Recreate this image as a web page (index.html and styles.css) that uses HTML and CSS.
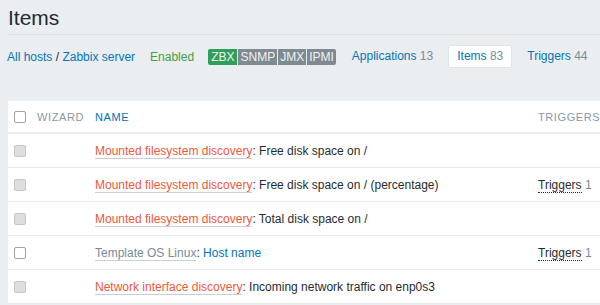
FILE: index.html
```html
<!DOCTYPE html>
<html lang="en">
<head>
    <meta charset="UTF-8">
    <title>Items</title>
    <link rel="stylesheet" href="styles.css">
</head>
<body>
    <div class="page">
        <!-- Header -->
        <div class="header">
            <h1>Items</h1>
        </div>

        <!-- Host navigation -->
        <div class="host-nav">
            <div class="breadcrumb"><a href="#">All hosts</a> / <a href="#">Zabbix server</a></div>
            <span class="status">Enabled</span>
            <div class="tags">
                <span class="tag green">ZBX</span>
                <span class="tag">SNMP</span>
                <span class="tag">JMX</span>
                <span class="tag">IPMI</span>
            </div>
            <div class="tabs">
                <a class="tab" href="#">Applications <span class="count">13</span></a>
                <a class="tab active" href="#">Items <span class="count">83</span></a>
                <a class="tab" href="#">Triggers <span class="count">44</span></a>
            </div>
        </div>

        <!-- Items table -->
        <div class="list">
            <div class="row head">
                <div class="cell"><span class="check"></span></div>
                <div class="cell th">Wizard</div>
                <div class="cell th sort">Name</div>
                <div class="cell th">Triggers</div>
            </div>
            <div class="row">
                <div class="cell"><span class="check off"></span></div>
                <div class="cell"></div>
                <div class="cell"><a class="parent orange" href="#">Mounted filesystem discovery</a>: Free disk space on /</div>
                <div class="cell"></div>
            </div>
            <div class="row">
                <div class="cell"><span class="check off"></span></div>
                <div class="cell"></div>
                <div class="cell"><a class="parent orange" href="#">Mounted filesystem discovery</a>: Free disk space on / (percentage)</div>
                <div class="cell"><span class="hint">Triggers</span> <span class="count">1</span></div>
            </div>
            <div class="row">
                <div class="cell"><span class="check off"></span></div>
                <div class="cell"></div>
                <div class="cell"><a class="parent orange" href="#">Mounted filesystem discovery</a>: Total disk space on /</div>
                <div class="cell"></div>
            </div>
            <div class="row">
                <div class="cell"><span class="check"></span></div>
                <div class="cell"></div>
                <div class="cell"><a class="parent grey" href="#">Template OS Linux</a>: <a class="item" href="#">Host name</a></div>
                <div class="cell"><span class="hint">Triggers</span> <span class="count">1</span></div>
            </div>
            <div class="row">
                <div class="cell"><span class="check off"></span></div>
                <div class="cell"></div>
                <div class="cell"><a class="parent orange" href="#">Network interface discovery</a>: Incoming network traffic on enp0s3</div>
                <div class="cell"></div>
            </div>
        </div>
    </div>
</body>
</html>
```

FILE: styles.css
```css
body {
    margin: 0;
    padding: 0;
    background-color: #ebeef0;
    font-family: 'Liberation Sans', Arial, sans-serif;
    font-size: 12px;
    color: #1f2c33;
    overflow: hidden;
}
a {
    color: #0275b8;
    text-decoration: none;
}
.page {
    padding-left: 8px;
}
.header {
    padding: 6px 0 4px;
    border-bottom: 1px solid #dde2e5;
}
.header h1 {
    margin: 0;
    font-size: 21px;
    line-height: 24px;
    font-weight: normal;
    color: #1f2c33;
}
.host-nav {
    display: flex;
    align-items: center;
    height: 23px;
    margin-top: 10px;
    white-space: nowrap;
}
.host-nav > * {
    flex-shrink: 0;
}
.breadcrumb {
    margin-left: -1px;
    color: #1f2c33;
}
.status {
    margin-left: 15px;
    color: #429e47;
}
.tags {
    display: flex;
    gap: 1px;
    margin-left: 14px;
}
.tag {
    height: 16px;
    line-height: 16px;
    padding: 0 2px;
    background: #7f8a91;
    color: #f0f3f4;
}
.tag:first-child {
    border-radius: 2px 0 0 2px;
}
.tag:last-child {
    border-radius: 0 2px 2px 0;
}
.tag.green {
    padding: 0 3px;
    background: #2f9f5b;
}
.tabs {
    display: flex;
    margin-left: 7px;
    gap: 6px;
}
.tab {
    display: block;
    height: 21px;
    line-height: 21px;
    padding: 0 8px;
    border: 1px solid transparent;
    border-radius: 2px;
}
.tab.active {
    background: #ffffff;
    border-color: #dfe4e7;
}
.count {
    color: #768d99;
}
.list {
    margin-top: 33px;
    background: #ffffff;
}
.row {
    display: grid;
    grid-template-columns: 29px 58px 443px 1fr;
    align-items: center;
    height: 33px;
    border-bottom: 1px solid #e6eaec;
}
.row.head {
    height: 31px;
    border-bottom: 2px solid #ebeef0;
}
.cell {
    white-space: nowrap;
    line-height: 16px;
}
.cell:first-child {
    padding-left: 6px;
    display: flex;
}
.th {
    font-size: 11px;
    text-transform: uppercase;
    letter-spacing: 0.6px;
    color: #869aa5;
}
.th.sort {
    color: #0275b8;
}
.check {
    display: block;
    width: 10px;
    height: 10px;
    border: 1px solid #a3a3a3;
    border-radius: 2px;
    background: #ffffff;
}
.check.off {
    background: #dedede;
    border-color: #c6c6c6;
}
.parent {
    border-bottom: 1px solid #c8d0d4;
}
.orange {
    color: #f0583a;
}
.grey {
    color: #768d99;
}
.hint {
    border-bottom: 1px dotted #1f2c33;
}
```
